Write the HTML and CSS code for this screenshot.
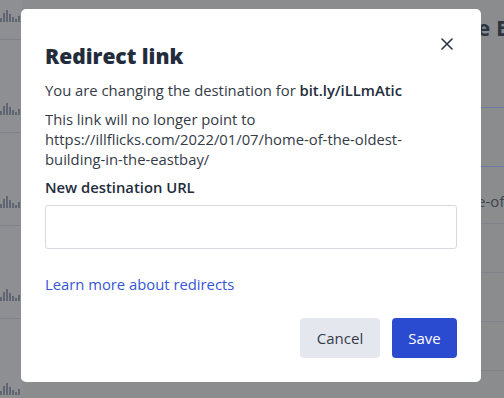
FILE: index.html
```html
<!DOCTYPE html>
<html lang="en">
<head>
<meta charset="utf-8">
<title>Redirect link</title>
<link rel="stylesheet" href="styles.css">
</head>
<body>
<div class="page">
  <aside class="side">
    <div class="side-row"><svg class="bars" width="22" height="12" viewBox="0 0 22 12"><rect x="0" y="8" width="2" height="4"/><rect x="3" y="3" width="2" height="9"/><rect x="6" y="0" width="2" height="12"/><rect x="9" y="4" width="2" height="8"/><rect x="12" y="7" width="2" height="5"/><rect x="15" y="9" width="2" height="3"/><rect x="18" y="6" width="2" height="6"/></svg></div>
    <div class="side-row"><svg class="bars" width="22" height="12" viewBox="0 0 22 12"><rect x="0" y="8" width="2" height="4"/><rect x="3" y="3" width="2" height="9"/><rect x="6" y="0" width="2" height="12"/><rect x="9" y="4" width="2" height="8"/><rect x="12" y="7" width="2" height="5"/><rect x="15" y="9" width="2" height="3"/><rect x="18" y="6" width="2" height="6"/></svg></div>
    <div class="side-row"><svg class="bars" width="22" height="12" viewBox="0 0 22 12"><rect x="0" y="8" width="2" height="4"/><rect x="3" y="3" width="2" height="9"/><rect x="6" y="0" width="2" height="12"/><rect x="9" y="4" width="2" height="8"/><rect x="12" y="7" width="2" height="5"/><rect x="15" y="9" width="2" height="3"/><rect x="18" y="6" width="2" height="6"/></svg></div>
    <div class="side-row"><svg class="bars" width="22" height="12" viewBox="0 0 22 12"><rect x="0" y="8" width="2" height="4"/><rect x="3" y="3" width="2" height="9"/><rect x="6" y="0" width="2" height="12"/><rect x="9" y="4" width="2" height="8"/><rect x="12" y="7" width="2" height="5"/><rect x="15" y="9" width="2" height="3"/><rect x="18" y="6" width="2" height="6"/></svg></div>
    <div class="side-row last"><svg class="bars" width="22" height="12" viewBox="0 0 22 12"><rect x="0" y="8" width="2" height="4"/><rect x="3" y="3" width="2" height="9"/><rect x="6" y="0" width="2" height="12"/><rect x="9" y="4" width="2" height="8"/><rect x="12" y="7" width="2" height="5"/><rect x="15" y="9" width="2" height="3"/><rect x="18" y="6" width="2" height="6"/></svg></div>
  </aside>
  <main class="main">
    <h1 class="bg-title">The Bay</h1>
    <div class="bg-row sel"></div>
    <div class="bg-row sel-end"></div>
    <div class="bg-row r3"><span class="bg-url">home-of-the-oldest</span></div>
    <div class="bg-row"></div>
    <div class="bg-row"></div>
    <div class="bg-row"></div>
  </main>
</div>

<div class="dialog" role="dialog" aria-labelledby="dlg-title">
  <h2 class="dlg-title" id="dlg-title">Redirect link</h2>
  <button class="close" aria-label="Close"><svg width="12" height="12" viewBox="0 0 12 12"><path d="M1 1 L11 11 M11 1 L1 11" stroke="#2b3242" stroke-width="1.6" stroke-linecap="round"/></svg></button>
  <p class="txt p1">You are changing the destination for <b>bit.ly/iLLmAtic</b></p>
  <p class="txt p2">This link will no longer point to https://illflicks.com/2022/01/07/home-of-the-oldest-building-in-the-eastbay/</p>
  <label class="lbl" for="url">New destination URL</label>
  <input class="inp" id="url" type="text">
  <a class="learn" href="#">Learn more about redirects</a>
  <div class="actions">
    <button class="btn cancel">Cancel</button>
    <button class="btn save">Save</button>
  </div>
</div>
</body>
</html>
```

FILE: styles.css
```css
html, body {
  margin: 0;
  padding: 0;
  width: 504px;
  height: 398px;
  overflow: hidden;
  font-family: "Open Sans", "Lato", sans-serif;
}

.page {
  display: flex;
  height: 398px;
  background: #8a8c8e;
}

.side {
  width: 48px;
  background: #8d8f92;
  display: flex;
  flex-direction: column;
}

.side-row {
  height: 93px;
  flex: none;
  border-bottom: 1px solid #7f8389;
  box-sizing: border-box;
  display: flex;
  align-items: flex-end;
  padding-bottom: 17px;
}
.side-row:first-child {
  height: 40px;
}
.side-row.last { border-bottom: none; }

.bars { fill: #5f6672; }

.main {
  flex: 1;
  display: flex;
  flex-direction: column;
}

.bg-title {
  margin: 0;
  height: 68px;
  padding: 12px 0 0 428px;
  box-sizing: border-box;
  font-size: 22px;
  line-height: 30px;
  font-weight: 700;
  color: #2f3540;
  white-space: nowrap;
}

.bg-row {
  border-bottom: 1px solid #80848a;
  box-sizing: border-box;
  height: 49px;
  flex: none;
}
.bg-row.sel { height: 40px; border-bottom-color: #6e78a0; }
.bg-row.sel-end { height: 59px; border-bottom-color: #6e78a0; }
.bg-row.r3 { height: 57px; padding: 23px 0 0 423px; }
.bg-url { font-size: 15px; color: #3f444c; white-space: nowrap; }

.dialog {
  position: absolute;
  left: 21px;
  top: 9px;
  width: 460px;
  height: 373px;
  box-sizing: border-box;
  background: #fff;
  border-radius: 5px;
  padding: 33px 24px 24px;
  display: flex;
  flex-direction: column;
  color: #343b47;
}

.dlg-title {
  margin: 0;
  font-size: 21px;
  line-height: 28px;
  font-weight: 800;
  color: #232c3b;
}

.close {
  position: absolute;
  top: 27px;
  right: 26px;
  width: 16px;
  height: 16px;
  padding: 0;
  border: none;
  background: none;
  display: flex;
  align-items: center;
  justify-content: center;
}

.txt {
  margin: 0;
  font-size: 14.8px;
  line-height: 20px;
}
.txt b { font-weight: 600; color: #232c3b; }
.p1 { margin-top: 10px; }
.p2 { margin-top: 9px; }

.lbl {
  margin-top: 8px;
  font-size: 14.8px;
  line-height: 20px;
  font-weight: 600;
  color: #232c3b;
}

.inp {
  margin-top: 8px;
  height: 44px;
  box-sizing: border-box;
  border: 1px solid #d6d9e2;
  border-radius: 3px;
  font: inherit;
  width: 100%;
}

.learn {
  margin-top: 25px;
  font-size: 14.8px;
  line-height: 20px;
  color: #3656d6;
  text-decoration: none;
  align-self: flex-start;
}

.actions {
  margin-top: 24px;
  display: flex;
  justify-content: flex-end;
  gap: 12px;
}

.btn {
  height: 40px;
  border: none;
  border-radius: 4px;
  font-family: inherit;
  font-size: 15px;
  padding: 0;
}
.cancel { background: #e5e7ef; color: #343b47; width: 80px; }
.save { background: #2a4ad0; color: #fff; width: 65px; }
```
